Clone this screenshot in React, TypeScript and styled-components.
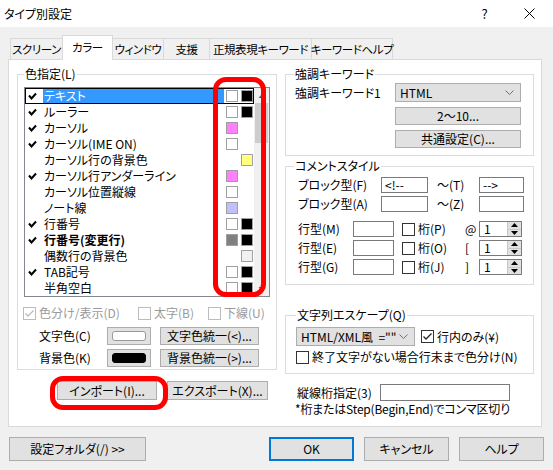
import styled, { createGlobalStyle } from "styled-components";

const GlobalStyle = createGlobalStyle`
  html, body { margin: 0; padding: 0; background: #f0f0f0; }
  body {
    font-family: "Noto Sans CJK JP", "Noto Sans", sans-serif;
    font-size: 12px;
    line-height: 16px;
    color: #000;
    font-feature-settings: "palt";
  }
  * { box-sizing: border-box; }
`;

const Window = styled.div`
  position: relative;
  width: 553px;
  height: 470px;
  background: #f0f0f0;
  display: flex;
  flex-direction: column;
`;

const TitleBar = styled.div`
  height: 27px;
  background: #fff;
  display: flex;
  align-items: center;
  padding: 0 1px 0 4px;
`;

const Title = styled.div`
  flex: 1;
`;

const CaptionButton = styled.div`
  width: 45px;
  height: 27px;
  display: flex;
  align-items: center;
  justify-content: center;
  font-size: 13px;
`;

const TabStrip = styled.div`
  display: flex;
  align-items: flex-end;
  height: 24px;
  margin-top: 8px;
  padding-left: 11px;
  position: relative;
  z-index: 1;
`;

const Tab = styled.div<{ $w: number; $active?: boolean }>`
  width: ${(p) => p.$w}px;
  height: ${(p) => (p.$active ? 25 : 21)}px;
  margin-left: -1px;
  margin-bottom: ${(p) => (p.$active ? -1 : 0)}px;
  padding-bottom: ${(p) => (p.$active ? 3 : 0)}px;
  border: 1px solid #d9d9d9;
  border-bottom: none;
  background: ${(p) => (p.$active ? "#fff" : "#f0f0f0")};
  display: flex;
  align-items: center;
  justify-content: center;
  white-space: nowrap;
  font-size: 11.5px;
  letter-spacing: -0.4px;
`;

const Panel = styled.div`
  margin: 0 11px 0 8px;
  height: 368px;
  border: 1px solid #d9d9d9;
  background: #fff;
  display: flex;
  gap: 8px;
  padding: 6px 0 0 8px;
`;

const Column = styled.div<{ $w: number }>`
  width: ${(p) => p.$w}px;
  display: flex;
  flex-direction: column;
`;

const Group = styled.fieldset<{ $pad: string; $mt?: number }>`
  margin: ${(p) => p.$mt ?? 0}px 0 0 0;
  padding: ${(p) => p.$pad};
  border: 1px solid #dcdcdc;
  min-width: 0;
`;

const Legend = styled.legend`
  padding: 0 1px;
  line-height: 16px;
`;

/* ---- colour list ---- */

const ListBox = styled.div`
  width: 246px;
  height: 210px;
  border: 1px solid #828790;
  display: flex;
  overflow: hidden;
`;

const Rows = styled.div`
  width: 229px;
  overflow: hidden;
`;

const Row = styled.div<{ $focus?: boolean }>`
  display: flex;
  align-items: center;
  height: 16px;
  outline: ${(p) => (p.$focus ? "1px solid #000" : "none")};
  outline-offset: -1px;
`;

const CheckCell = styled.div`
  width: 18px;
  height: 16px;
  display: flex;
  align-items: center;
  justify-content: center;
  padding-right: 3px;
`;

const ItemLabel = styled.div<{ $sel?: boolean; $bold?: boolean }>`
  width: 181px;
  height: 16px;
  padding-left: 1px;
  background: ${(p) => (p.$sel ? "#3399ff" : "transparent")};
  color: ${(p) => (p.$sel ? "#fff" : "#000")};
  font-weight: ${(p) => (p.$bold ? 700 : 400)};
  white-space: nowrap;
`;

const Swatch = styled.div<{ $c?: string; $ml: number }>`
  width: 12px;
  height: 12px;
  margin-left: ${(p) => p.$ml}px;
  border: 1px solid ${(p) => (p.$c ? "#a0a0a0" : "transparent")};
  background: ${(p) => p.$c ?? "transparent"};
`;

const ScrollBar = styled.div`
  width: 15px;
  background: #f0f0f0;
  display: flex;
  flex-direction: column;
  align-items: center;
`;

const ScrollArrow = styled.div`
  height: 15px;
  width: 15px;
  display: flex;
  align-items: center;
  justify-content: center;
`;

const Thumb = styled.div`
  width: 13px;
  height: 40px;
  background: #cdcdcd;
`;

const ScrollTrack = styled.div`
  flex: 1;
`;

/* ---- controls ---- */

const Box = styled.span<{ $disabled?: boolean }>`
  width: 13px;
  height: 13px;
  border: 1px solid ${(p) => (p.$disabled ? "#bcbcbc" : "#333")};
  background: #fff;
  display: inline-flex;
  align-items: center;
  justify-content: center;
  flex: none;
`;

const CheckLabel = styled.label<{ $w?: number; $disabled?: boolean }>`
  display: flex;
  align-items: center;
  gap: 3px;
  width: ${(p) => (p.$w ? `${p.$w}px` : "auto")};
  color: ${(p) => (p.$disabled ? "#9a9a9a" : "#000")};
  white-space: nowrap;
`;

const CheckRow = styled.div`
  display: flex;
  margin: 9px 0 0 -1px;
  height: 14px;
`;

const ColorRow = styled.div<{ $mt: number }>`
  display: flex;
  align-items: center;
  margin-top: ${(p) => p.$mt}px;
  padding-left: 15px;
`;

const FieldLabel = styled.div<{ $w: number; $pl?: number }>`
  width: ${(p) => p.$w}px;
  padding-left: ${(p) => p.$pl ?? 0}px;
  white-space: nowrap;
`;

const Button = styled.button<{ $w: number; $h?: number; $default?: boolean }>`
  width: ${(p) => p.$w}px;
  height: ${(p) => p.$h ?? 18}px;
  margin: 0;
  padding: 0;
  font: inherit;
  color: #000;
  background: #e1e1e1;
  border: ${(p) => (p.$default ? "2px solid #0078d7" : "1px solid #adadad")};
  display: flex;
  align-items: center;
  justify-content: center;
  white-space: nowrap;
  flex: none;
`;

const ColorButton = styled(Button)`
  margin-right: 9px;
  padding: 3px 4px;
`;

const ColorChip = styled.span<{ $c: string }>`
  display: block;
  width: 100%;
  height: 100%;
  border-radius: 3px;
  border: 1px solid ${(p) => (p.$c === "#000" ? "#000" : "#9a9a9a")};
  background: ${(p) => p.$c};
`;

const ButtonRow = styled.div`
  display: flex;
  gap: 10px;
  margin-top: 11px;
  padding-left: 40px;
`;

const Select = styled.div<{ $w: number }>`
  width: ${(p) => p.$w}px;
  height: 19px;
  background: #e1e1e1;
  border: 1px solid #adadad;
  display: flex;
  align-items: center;
  justify-content: space-between;
  padding: 0 6px 0 4px;
  white-space: nowrap;
`;

const KeywordGrid = styled.div`
  display: grid;
  grid-template-columns: 101px 126px;
  row-gap: 5px;
  align-items: center;
`;

const Input = styled.div<{ $w: number; $h?: number }>`
  width: ${(p) => p.$w}px;
  height: ${(p) => p.$h ?? 16}px;
  border: 1px solid #7a7a7a;
  background: #fff;
  padding-left: 3px;
  line-height: ${(p) => (p.$h ?? 16) - 2}px;
  display: flex;
  align-items: center;
  white-space: nowrap;
`;

const CommentRow = styled.div<{ $cols: string; $mt: number }>`
  display: grid;
  grid-template-columns: ${(p) => p.$cols};
  align-items: center;
  margin-top: ${(p) => p.$mt}px;
  padding-left: 4px;
  height: 16px;
`;

const Spin = styled.div`
  width: 43px;
  height: 16px;
  border: 1px solid #7a7a7a;
  display: flex;
  align-items: stretch;
`;

const SpinText = styled.div`
  flex: 1;
  padding-left: 4px;
  line-height: 14px;
`;

const SpinButtons = styled.div`
  width: 14px;
  background: #e1e1e1;
  border-left: 1px solid #c8c8c8;
  display: flex;
  flex-direction: column;
`;

const SpinHalf = styled.div`
  flex: 1;
  display: flex;
  align-items: center;
  justify-content: center;
  & + & {
    border-top: 1px solid #c8c8c8;
  }
`;

const EscapeRow = styled.div<{ $mt?: number }>`
  display: flex;
  align-items: center;
  gap: 6px;
  margin-top: ${(p) => p.$mt ?? 0}px;
`;

const VLineRow = styled.div`
  display: flex;
  align-items: center;
  margin-top: 10px;
  padding-left: 12px;
`;

const Note = styled.div`
  padding-left: 10px;
  white-space: nowrap;
  letter-spacing: -0.2px;
`;

const Footer = styled.div`
  display: flex;
  gap: 10px;
  margin-top: 10px;
  padding: 0 9px;
`;

const Spacer = styled.div`
  flex: 1;
`;

const Annotation = styled.div<{ $x: number; $y: number; $w: number; $h: number }>`
  position: absolute;
  left: ${(p) => p.$x}px;
  top: ${(p) => p.$y}px;
  width: ${(p) => p.$w}px;
  height: ${(p) => p.$h}px;
  border: 5px solid #ff0000;
  border-radius: 13px;
  pointer-events: none;
`;

/* ---- glyphs ---- */

const ListTick = () => (
  <svg width="9" height="8" viewBox="0 0 9 8">
    <path d="M1 3.5 L3.5 6.5 L8 1.5" fill="none" stroke="#000" strokeWidth="2" />
  </svg>
);

const BoxTick = ({ color }: { color: string }) => (
  <svg width="11" height="11" viewBox="0 0 11 11">
    <path d="M1.5 5.5 L4 8 L9.5 2.5" fill="none" stroke={color} strokeWidth="1.3" />
  </svg>
);

const Chevron = () => (
  <svg width="9" height="5" viewBox="0 0 9 5">
    <path d="M0.5 0.5 L4.5 4.5 L8.5 0.5" fill="none" stroke="#707070" strokeWidth="1" />
  </svg>
);

const Tri = ({ up }: { up?: boolean }) => (
  <svg width="7" height="4" viewBox="0 0 7 4">
    <path d={up ? "M0 4 L3.5 0 L7 4 Z" : "M0 0 L3.5 4 L7 0 Z"} fill="#000" />
  </svg>
);

const ScrollTri = ({ up }: { up?: boolean }) => (
  <svg width="7" height="4" viewBox="0 0 7 4">
    <path d={up ? "M0.5 4 L3.5 0.5 L6.5 4 Z" : "M0.5 0 L3.5 3.5 L6.5 0 Z"} fill="#606060" />
  </svg>
);

const CloseX = () => (
  <svg width="11" height="11" viewBox="0 0 11 11">
    <path d="M0.5 0.5 L10.5 10.5 M10.5 0.5 L0.5 10.5" stroke="#000" strokeWidth="1" />
  </svg>
);

const Check = ({ checked, disabled }: { checked?: boolean; disabled?: boolean }) => (
  <Box $disabled={disabled}>{checked && <BoxTick color={disabled ? "#bcbcbc" : "#222"} />}</Box>
);

/* ---- data ---- */

const tabs = [
  { label: "スクリーン", w: 53 },
  { label: "カラー", w: 51, active: true },
  { label: "ウィンドウ", w: 52 },
  { label: "支援", w: 47 },
  { label: "正規表現キーワード", w: 103 },
  { label: "キーワードヘルプ", w: 82 },
];

type Item = { label: string; on: boolean; fg?: string; bg?: string; bold?: boolean };

const items: Item[] = [
  { label: "テキスト", on: true, fg: "#fff", bg: "#000" },
  { label: "ルーラー", on: true, fg: "#fff", bg: "#000" },
  { label: "カーソル", on: true, fg: "#ff80ff" },
  { label: "カーソル(IME ON)", on: true, fg: "#fff" },
  { label: "カーソル行の背景色", on: false, bg: "#ffff80" },
  { label: "カーソル行アンダーライン", on: true, fg: "#ff80ff" },
  { label: "カーソル位置縦線", on: false, fg: "#fff" },
  { label: "ノート線", on: false, fg: "#c0c0ff" },
  { label: "行番号", on: true, fg: "#fff", bg: "#000" },
  { label: "行番号(変更行)", on: true, fg: "#808080", bg: "#000", bold: true },
  { label: "偶数行の背景色", on: false, bg: "#f0f0f0" },
  { label: "TAB記号", on: true, fg: "#fff", bg: "#000" },
  { label: "半角空白", on: false, fg: "#fff", bg: "#000" },
];

const lineRows = [
  { label: "行型(M)", col: "桁(P)", sym: "@", mt: 9 },
  { label: "行型(E)", col: "桁(O)", sym: "[", mt: 3 },
  { label: "行型(G)", col: "桁(J)", sym: "]", mt: 3 },
];

export default function App() {
  return (
    <>
      <GlobalStyle />
      <Window>
        <TitleBar>
          <Title>タイプ別設定</Title>
          <CaptionButton>?</CaptionButton>
          <CaptionButton>
            <CloseX />
          </CaptionButton>
        </TitleBar>

        <TabStrip>
          {tabs.map((t) => (
            <Tab key={t.label} $w={t.w} $active={t.active}>
              {t.label}
            </Tab>
          ))}
        </TabStrip>

        <Panel>
          <Column $w={260}>
            <Group $pad="5px 6px 2px 6px">
              <Legend>色指定(L)</Legend>
              <ListBox>
                <Rows>
                  {items.map((it, i) => (
                    <Row key={it.label} $focus={i === 0}>
                      <CheckCell>{it.on && <ListTick />}</CheckCell>
                      <ItemLabel $sel={i === 0} $bold={it.bold}>
                        {it.label}
                      </ItemLabel>
                      <Swatch $c={it.fg} $ml={2} />
                      <Swatch $c={it.bg} $ml={3} />
                    </Row>
                  ))}
                </Rows>
                <ScrollBar>
                  <ScrollArrow>
                    <ScrollTri up />
                  </ScrollArrow>
                  <Thumb />
                  <ScrollTrack />
                  <ScrollArrow>
                    <ScrollTri />
                  </ScrollArrow>
                </ScrollBar>
              </ListBox>

              <CheckRow>
                <CheckLabel $w={115} $disabled>
                  <Check checked disabled />
                  色分け/表示(D)
                </CheckLabel>
                <CheckLabel $w={70} $disabled>
                  <Check disabled />
                  太字(B)
                </CheckLabel>
                <CheckLabel $disabled>
                  <Check disabled />
                  下線(U)
                </CheckLabel>
              </CheckRow>

              <ColorRow $mt={7}>
                <FieldLabel $w={68}>文字色(C)</FieldLabel>
                <ColorButton $w={44}>
                  <ColorChip $c="#fff" />
                </ColorButton>
                <Button $w={99}>文字色統一(&lt;)...</Button>
              </ColorRow>
              <ColorRow $mt={4}>
                <FieldLabel $w={68}>背景色(K)</FieldLabel>
                <ColorButton $w={44}>
                  <ColorChip $c="#000" />
                </ColorButton>
                <Button $w={99}>背景色統一(&gt;)...</Button>
              </ColorRow>
            </Group>

            <ButtonRow>
              <Button $w={100} $h={19}>
                インポート(I)...
              </Button>
              <Button $w={101} $h={19}>
                エクスポート(X)...
              </Button>
            </ButtonRow>
          </Column>

          <Column $w={249}>
            <Group $pad="1px 12px 7px 8px">
              <Legend>強調キーワード</Legend>
              <KeywordGrid>
                <FieldLabel $w={101} $pl={1}>
                  強調キーワード1
                </FieldLabel>
                <Select $w={126}>
                  HTML
                  <Chevron />
                </Select>
                <span />
                <Button $w={126}>2〜10...</Button>
                <span />
                <Button $w={126}>共通設定(C)...</Button>
              </KeywordGrid>
            </Group>

            <Group $pad="0 8px 9px 8px" $mt={2}>
              <Legend>コメントスタイル</Legend>
              <CommentRow $cols="83px 47px 51px 45px" $mt={3}>
                <FieldLabel $w={83}>ブロック型(F)</FieldLabel>
                <Input $w={47}>&lt;!--</Input>
                <FieldLabel $w={51} $pl={9}>
                  〜(T)
                </FieldLabel>
                <Input $w={45}>--&gt;</Input>
              </CommentRow>
              <CommentRow $cols="83px 47px 51px 45px" $mt={3}>
                <FieldLabel $w={83}>ブロック型(A)</FieldLabel>
                <Input $w={47} />
                <FieldLabel $w={51} $pl={9}>
                  〜(Z)
                </FieldLabel>
                <Input $w={45} />
              </CommentRow>
              {lineRows.map((r) => (
                <CommentRow key={r.label} $cols="55px 41px 71px 14px 43px" $mt={r.mt}>
                  <FieldLabel $w={55}>{r.label}</FieldLabel>
                  <Input $w={41} />
                  <FieldLabel $w={71} $pl={8}>
                    <CheckLabel>
                      <Check />
                      {r.col}
                    </CheckLabel>
                  </FieldLabel>
                  <FieldLabel $w={14}>{r.sym}</FieldLabel>
                  <Spin>
                    <SpinText>1</SpinText>
                    <SpinButtons>
                      <SpinHalf>
                        <Tri up />
                      </SpinHalf>
                      <SpinHalf>
                        <Tri />
                      </SpinHalf>
                    </SpinButtons>
                  </Spin>
                </CommentRow>
              ))}
            </Group>

            <Group $pad="4px 8px 8px 10px" $mt={22}>
              <Legend>文字列エスケープ(Q)</Legend>
              <EscapeRow>
                <Select $w={119}>
                  HTML/XML風&nbsp;&nbsp;=""
                  <Chevron />
                </Select>
                <CheckLabel>
                  <Check checked />
                  行内のみ(¥)
                </CheckLabel>
              </EscapeRow>
              <EscapeRow $mt={3}>
                <CheckLabel>
                  <Check />
                  終了文字がない場合行末まで色分け(N)
                </CheckLabel>
              </EscapeRow>
            </Group>

            <VLineRow>
              <FieldLabel $w={83}>縦線桁指定(3)</FieldLabel>
              <Input $w={130} $h={17} />
            </VLineRow>
            <Note>*桁またはStep(Begin,End)でコンマ区切り</Note>
          </Column>
        </Panel>

        <Footer>
          <Button $w={137} $h={24}>
            設定フォルダ(/) &gt;&gt;
          </Button>
          <Spacer />
          <Button $w={85} $h={24} $default>
            OK
          </Button>
          <Button $w={85} $h={24}>
            キャンセル
          </Button>
          <Button $w={85} $h={24}>
            ヘルプ
          </Button>
        </Footer>

        <Annotation $x={213} $y={77} $w={53} $h={220} />
        <Annotation $x={50} $y={376} $w={118} $h={34} />
      </Window>
    </>
  );
}
